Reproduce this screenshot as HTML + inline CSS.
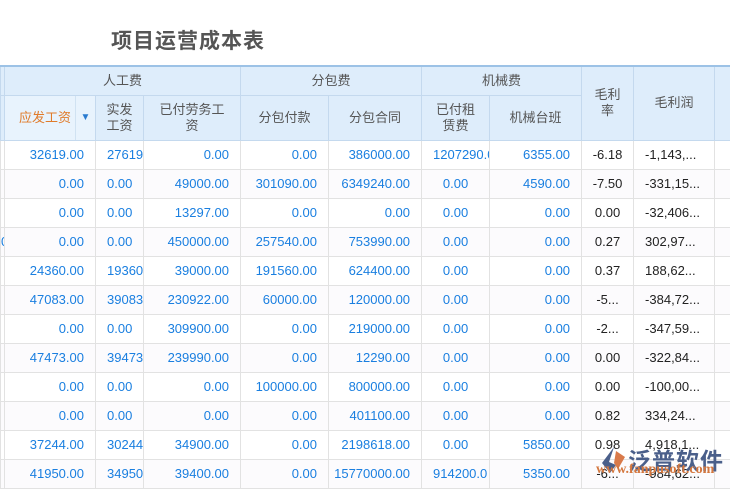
<!DOCTYPE html>
<html><head><meta charset="utf-8"><style>
body{margin:0;width:730px;height:488px;overflow:hidden;background:#fff;font-family:"Liberation Sans","Noto Sans CJK SC",sans-serif;position:relative}
.title{position:absolute;left:111px;top:25px;font-size:21px;font-weight:bold;color:#555;letter-spacing:1px}
table{position:absolute;left:0;top:65px;border-collapse:collapse;table-layout:fixed;width:730px;font-size:13px}
td,th{padding:0 4px;overflow:hidden;white-space:nowrap;border:1px solid #e2e2e2}
th{background:#deedfb;color:#555;font-weight:normal;border-color:#c4d9ee;line-height:16px}
thead tr:first-child th{border-top:2px solid #9cc2e6}
tbody td{height:28px;color:#1a7fe0;text-align:right;padding-right:11px}
tbody tr:nth-child(even) td{background:#fcfbfd}
td.l{text-align:left;padding-left:11px}
td.c{text-align:center;padding-right:4px}
td.k{color:#222}
.wm{position:absolute;left:604px;top:440px}
</style></head><body>
<div class="title">项目运营成本表</div>
<table>
<colgroup><col style="width:4px"><col style="width:71px"><col style="width:20px"><col style="width:48px"><col style="width:97px"><col style="width:88px"><col style="width:93px"><col style="width:68px"><col style="width:92px"><col style="width:52px"><col style="width:81px"><col style="width:16px"></colgroup>
<thead>
<tr style="height:29px"><th></th><th colspan="4">人工费</th><th colspan="2">分包费</th><th colspan="2">机械费</th><th rowspan="2">毛利<br>率</th><th rowspan="2">毛利润</th><th rowspan="2"></th></tr>
<tr style="height:45px"><th></th><th style="background:#e8f3fd;color:#e07b2a;text-align:right;border-right:none">应发工资</th><th style="background:#e8f3fd;color:#2a7bd0;font-size:10px;border-left:1px solid #d0e2f2">▼</th><th>实发<br>工资</th><th>已付劳务工<br>资</th><th>分包付款</th><th>分包合同</th><th>已付租<br>赁费</th><th>机械台班</th></tr>
</thead>
<tbody>
<tr><td></td><td colspan="2">32619.00</td><td class="l">27619</td><td>0.00</td><td>0.00</td><td>386000.00</td><td class="l">1207290.0</td><td>6355.00</td><td class="c k">-6.18</td><td class="l k">-1,143,...</td><td></td></tr>
<tr><td></td><td colspan="2">0.00</td><td class="l">0.00</td><td>49000.00</td><td>301090.00</td><td>6349240.00</td><td class="c">0.00</td><td>4590.00</td><td class="c k">-7.50</td><td class="l k">-331,15...</td><td></td></tr>
<tr><td></td><td colspan="2">0.00</td><td class="l">0.00</td><td>13297.00</td><td>0.00</td><td>0.00</td><td class="c">0.00</td><td>0.00</td><td class="c k">0.00</td><td class="l k">-32,406...</td><td></td></tr>
<tr><td style="color:#1a7fe0;padding:0">0</td><td colspan="2">0.00</td><td class="l">0.00</td><td>450000.00</td><td>257540.00</td><td>753990.00</td><td class="c">0.00</td><td>0.00</td><td class="c k">0.27</td><td class="l k">302,97...</td><td></td></tr>
<tr><td></td><td colspan="2">24360.00</td><td class="l">19360</td><td>39000.00</td><td>191560.00</td><td>624400.00</td><td class="c">0.00</td><td>0.00</td><td class="c k">0.37</td><td class="l k">188,62...</td><td></td></tr>
<tr><td></td><td colspan="2">47083.00</td><td class="l">39083</td><td>230922.00</td><td>60000.00</td><td>120000.00</td><td class="c">0.00</td><td>0.00</td><td class="c k">-5...</td><td class="l k">-384,72...</td><td></td></tr>
<tr><td></td><td colspan="2">0.00</td><td class="l">0.00</td><td>309900.00</td><td>0.00</td><td>219000.00</td><td class="c">0.00</td><td>0.00</td><td class="c k">-2...</td><td class="l k">-347,59...</td><td></td></tr>
<tr><td></td><td colspan="2">47473.00</td><td class="l">39473</td><td>239990.00</td><td>0.00</td><td>12290.00</td><td class="c">0.00</td><td>0.00</td><td class="c k">0.00</td><td class="l k">-322,84...</td><td></td></tr>
<tr><td></td><td colspan="2">0.00</td><td class="l">0.00</td><td>0.00</td><td>100000.00</td><td>800000.00</td><td class="c">0.00</td><td>0.00</td><td class="c k">0.00</td><td class="l k">-100,00...</td><td></td></tr>
<tr><td></td><td colspan="2">0.00</td><td class="l">0.00</td><td>0.00</td><td>0.00</td><td>401100.00</td><td class="c">0.00</td><td>0.00</td><td class="c k">0.82</td><td class="l k">334,24...</td><td></td></tr>
<tr><td></td><td colspan="2">37244.00</td><td class="l">30244</td><td>34900.00</td><td>0.00</td><td>2198618.00</td><td class="c">0.00</td><td>5850.00</td><td class="c k">0.98</td><td class="l k">4,918,1...</td><td></td></tr>
<tr><td></td><td colspan="2">41950.00</td><td class="l">34950</td><td>39400.00</td><td>0.00</td><td>15770000.00</td><td class="l">914200.0</td><td>5350.00</td><td class="c k">-6...</td><td class="l k">-984,62...</td><td></td></tr>
</tbody></table>
<div class="wm">
<svg width="26" height="30" style="position:absolute;left:-4px;top:5px"><path d="M14 2 L2 18 L10 28 L16 20 L9 17 Z" fill="#4a5f8a"/><path d="M16 6 L25 12 L18 24 L14 18 Z" fill="#d97a4a"/></svg>
<div style="position:absolute;left:24px;top:2px;font-size:23px;font-weight:bold;color:#4a5f8a;white-space:nowrap;letter-spacing:1px">泛普软件</div>
<div style="position:absolute;left:-8px;top:22px;font-size:14px;font-family:'Liberation Serif',serif;font-weight:bold;color:#d4773e;white-space:nowrap">www.fanpusoft.com</div>
</div>
</body></html>
